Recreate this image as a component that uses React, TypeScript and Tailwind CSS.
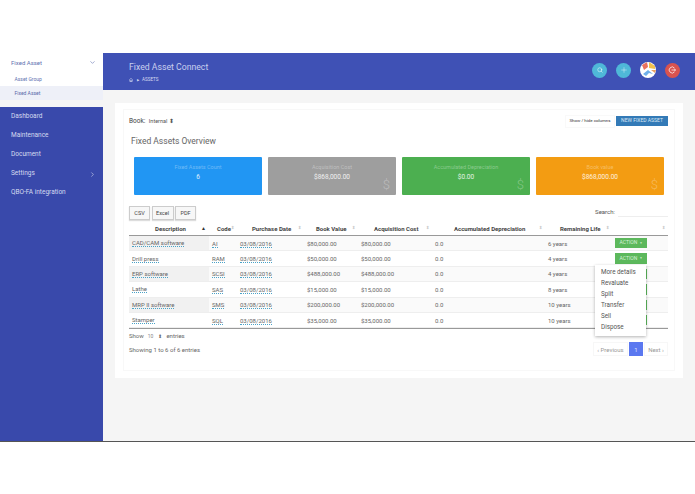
import React from "react";
import { ChevronDown, ChevronRight, Search, Plus, Home } from "lucide-react";

const font = "font-['Roboto','Liberation_Sans',sans-serif]";
const rows = [
  ["CAD/CAM software", "AI", "$80,000.00", "$80,000.00", "6 years"],
  ["Drill press", "RAM", "$50,000.00", "$50,000.00", "4 years"],
  ["ERP software", "SCSI", "$488,000.00", "$488,000.00", "4 years"],
  ["Lathe", "SAS", "$15,000.00", "$15,000.00", "8 years"],
  ["MRP II software", "SMS", "$200,000.00", "$200,000.00", "10 years"],
  ["Stamper", "SQL", "$35,000.00", "$35,000.00", "10 years"],
];
const cols = "grid grid-cols-[80px_28px_67px_54px_74px_113px_67px_56px]";

function Sort({ active }: { active?: boolean }) {
  return (
    <span className={`leading-none ${active ? "text-[5px] text-[#333]" : "text-[4px] text-[#ccc]"}`}>{active ? "▲" : "⬍"}</span>
  );
}

function Card({ bg, title, value, dollar }: { bg: string; title: string; value: string; dollar?: boolean }) {
  return (
    <div className={`relative flex h-[38px] w-[128px] flex-col items-center rounded-[1px] pt-[6px] ${bg}`}>
      <span className="text-[5.5px] leading-[8px] text-white/35">{title}</span>
      <span className="mt-[1.5px] text-[6.5px] leading-[9px] text-white/85">{value}</span>
      {dollar && <span className="absolute bottom-[3px] right-[6px] text-[13px] font-light leading-[15px] text-white/30">$</span>}
    </div>
  );
}

function Nav({ label, arrow }: { label: string; arrow?: boolean }) {
  return (
    <div className="flex h-[19px] items-center justify-between pl-[11px] pr-[7.5px] text-[6.5px] text-[#d5daf0]">
      <span>{label}</span>
      {arrow && <ChevronRight size={7} strokeWidth={2} />}
    </div>
  );
}

function Head({ label, pad, active }: { label: string; pad: string; active?: boolean }) {
  return (
    <div className={`flex items-center justify-between whitespace-nowrap pr-[3px] ${pad}`}>
      <span>{label}</span>
      <Sort active={active} />
    </div>
  );
}

function Dotted({ children }: { children: React.ReactNode }) {
  return <span className="border-b border-dotted border-[#4aa3c7] leading-[7px]">{children}</span>;
}

export default function App() {
  return (
    <div className={`${font} flex h-[494px] w-[695px] flex-col overflow-hidden bg-white text-[#555]`}>
      <div className="h-[53px] shrink-0" />
      <div className="flex h-[389px] shrink-0 border-b border-[#555] bg-[#f5f5f5]">
        <aside className="flex w-[103px] shrink-0 flex-col">
          <div className="h-[47px] bg-white">
            <div className="flex h-[19px] items-center justify-between pl-[11px] pr-[7.5px] text-[6px] text-[#6272b0]">
              <span>Fixed Asset</span>
              <ChevronDown size={7} strokeWidth={2} />
            </div>
            <div className="flex h-[14px] items-center pl-[14.5px] pt-[2px] text-[5px] text-[#6272b0]">Asset Group</div>
            <div className="flex h-[14px] items-center bg-[#eef0f8] pl-[14.5px] pt-[1px] text-[5px] text-[#5868a8]">Fixed Asset</div>
          </div>
          <div className="mt-[7px] flex-1 bg-[#3949ab] pt-[0.5px]">
            <Nav label="Dashboard" />
            <Nav label="Maintenance" />
            <Nav label="Document" />
            <Nav label="Settings" arrow />
            <Nav label="QBO-FA integration" />
          </div>
        </aside>
        <main className="flex min-w-0 flex-1 flex-col">
          <header className="flex h-[37px] shrink-0 items-center justify-between bg-[#3f51b5] pl-[26px] pr-[15.5px]">
            <div>
              <div className="text-[8.7px] leading-[14px] text-[#c9cfee]">Fixed Asset Connect</div>
              <div className="mt-[2px] flex items-center gap-[3.5px] text-[4.6px] leading-[8px] text-[#d5daf0]">
                <Home size={4} strokeWidth={3} />
                <span className="text-[3px]">▶</span>
                <span>ASSETS</span>
              </div>
            </div>
            <div className="-mt-[3px] flex items-center gap-[8.7px]">
              <span className="flex size-[15px] items-center justify-center rounded-full bg-[#4fb8d8] text-white/80"><Search size={6} strokeWidth={2.5} /></span>
              <span className="flex size-[15px] items-center justify-center rounded-full bg-[#4fb8d8] text-white/80"><Plus size={8} strokeWidth={1.5} /></span>
              <span className="size-[16px] overflow-hidden rounded-full bg-white">
                <svg viewBox="0 0 16 16" className="size-full">
                  <path d="M2 3 L7 0 L8 5 L4 8Z" fill="#e9705f" />
                  <path d="M9 0 L15 4 L15 7 L9 6Z" fill="#f2c14e" />
                  <path d="M3 12 L8 8 L13 12 L9 11 L6 14Z" fill="#6fb0ea" />
                  <path d="M11 8 L16 8 L15 11Z" fill="#e9a05f" />
                </svg>
              </span>
              <span className="flex size-[15px] items-center justify-center rounded-full bg-[#d9534f] text-white/80">
                <svg viewBox="0 0 16 16" className="size-[8px]" fill="none" stroke="currentColor" strokeWidth="1.8">
                  <path d="M13 4.2 A6 6 0 1 0 13 11.8" />
                  <path d="M7 8 H15 M12.5 5.5 L15 8 L12.5 10.5" />
                </svg>
              </span>
            </div>
          </header>
          <div className="ml-[12px] mr-[12px] mt-[13px] h-[275px] bg-white px-[8px] pb-[7px] pt-[6px]">
            <div className="h-full border border-[#f8f8f8] pb-0 pl-[5px] pr-[6px] pt-[6px]">
              <div className="flex h-[10px] items-center justify-between">
                <div className="flex items-center gap-[3.5px] text-[6px] leading-[8px]">
                  <span className="text-[6.5px] text-[#444]">Book:</span>
                  <span className="text-[5.5px]">Internal ⬍</span>
                </div>
                <div className="flex items-center gap-[1px]">
                  <span className="flex h-[13px] items-center border border-[#f9f9f9] px-[3.5px] text-[4.4px] text-[#333]">Show / hide columns</span>
                  <span className="flex h-[10px] w-[52px] items-center justify-center bg-[#337ab7] text-[5px] text-[#dce8f5]">NEW FIXED ASSET</span>
                </div>
              </div>
              <div className="mt-[8.5px] pl-[2px] text-[8.5px] leading-[13px] text-[#666]">Fixed Assets Overview</div>
              <div className="mt-[9.5px] flex gap-[6px] pl-[5px]">
                <Card bg="bg-[#2196f3]" title="Fixed Assets Count" value="6" />
                <Card bg="bg-[#9e9e9e]" title="Acquisition Cost" value="$868,000.00" dollar />
                <Card bg="bg-[#4caf50]" title="Accumulated Depreciation" value="$0.00" dollar />
                <Card bg="bg-[#f39c12]" title="Book value" value="$868,000.00" dollar />
              </div>
              <div className="mt-[11px] flex h-[15px] items-start justify-between">
                <div className="flex gap-[1.5px]">
                  <span className="flex h-[14px] w-[21px] items-center justify-center border border-[#ccc] bg-[#f7f7f7] text-[5.5px] text-[#444] shadow-[0_1px_1px_#ddd]">CSV</span>
                  <span className="flex h-[14px] w-[22px] items-center justify-center border border-[#ccc] bg-[#f7f7f7] text-[5.5px] text-[#444] shadow-[0_1px_1px_#ddd]">Excel</span>
                  <span className="flex h-[14px] w-[21px] items-center justify-center border border-[#ccc] bg-[#f7f7f7] text-[5.5px] text-[#444] shadow-[0_1px_1px_#ddd]">PDF</span>
                </div>
                <div className="flex items-center gap-[3px] text-[6px] leading-[10px] text-[#555]">
                  <span>Search:</span>
                  <span className="mt-[2px] h-[9px] w-[50px] border-b border-[#eee]" />
                </div>
              </div>
              <div className="relative">
                <div className={`${cols} h-[15px] items-center border-b-[1.5px] border-[#999] text-[6px] font-bold text-[#444]`}>
                  <Head label="Description" pad="pl-[26px]" active />
                  <Head label="Code" pad="pl-[8px]" />
                  <Head label="Purchase Date" pad="pl-[15px]" />
                  <Head label="Book Value" pad="pl-[12px]" />
                  <Head label="Acquisition Cost" pad="pl-[16px]" />
                  <Head label="Accumulated Depreciation" pad="pl-[22px]" />
                  <Head label="Remaining Life" pad="pl-[15px]" />
                  <div className="flex justify-end pr-[3px]"><Sort /></div>
                </div>
                {rows.map((r, i) => (
                  <div key={r[0]} className={`${cols} h-[15.4px] items-center border-b border-[#eee] text-[6px] text-[#666] ${i % 2 === 0 ? "bg-[#fafafa]" : ""}`}>
                    <div className={`flex h-full items-center pl-[3px] ${i % 2 === 0 ? "bg-[#f1f1f1]" : ""}`}><Dotted>{r[0]}</Dotted></div>
                    <div className="pl-[3px]"><Dotted>{r[1]}</Dotted></div>
                    <div className="pl-[3px]"><Dotted>03/08/2016</Dotted></div>
                    <div className="pl-[3px]">{r[2]}</div>
                    <div className="pl-[3px]">{r[3]}</div>
                    <div className="pl-[3px]">0.0</div>
                    <div className="pl-[3px]">{r[4]}</div>
                    <div className="relative pl-[3px]">
                      <span className="flex h-[10.5px] w-[32px] items-center justify-center gap-[2px] bg-[#5cb85c] text-[5px] text-[#d8f0d8]">
                        ACTION <span className="text-[3px]">▼</span>
                      </span>
                      {i === 1 && (
                        <div className="absolute left-[-17px] top-[11.5px] z-10 flex h-[71px] w-[51px] flex-col justify-center bg-white pl-[6px] text-[6.3px] text-[#555] shadow-[0_1px_3px_rgba(0,0,0,0.3)]">
                          {["More details", "Revaluate", "Split", "Transfer", "Sell", "Dispose"].map((m) => (
                            <div key={m} className="flex h-[11px] items-center">{m}</div>
                          ))}
                        </div>
                      )}
                    </div>
                  </div>
                ))}
                <div className="h-[1px] bg-[#999]" />
              </div>
              <div className="flex h-[27px] items-end justify-between">
                <div className="flex h-full flex-col pt-[2.5px] text-[6px] text-[#666]">
                  <div className="flex h-[8px] items-center">
                    <span>Show</span>
                    <span className="ml-[4px] text-[5px] leading-[8px] text-[#888]">10</span>
                    <span className="ml-[5px] text-[5px] leading-[8px]">⬍</span>
                    <span className="ml-[4px]">entries</span>
                  </div>
                  <div className="mt-[6px] leading-[8px]">Showing 1 to 6 of 6 entries</div>
                </div>
                <div className="flex h-[14px] items-center text-[6px] text-[#999]">
                  <span className="flex h-full w-[35px] items-center justify-center border border-[#f7f7f7]">‹ Previous</span>
                  <span className="mx-[1px] flex h-full w-[14px] items-center justify-center bg-[#5b78f0] text-[#dfe5fd]">1</span>
                  <span className="flex h-full w-[24px] items-center justify-center border border-[#f7f7f7]">Next ›</span>
                </div>
              </div>
            </div>
          </div>
        </main>
      </div>
    </div>
  );
}
